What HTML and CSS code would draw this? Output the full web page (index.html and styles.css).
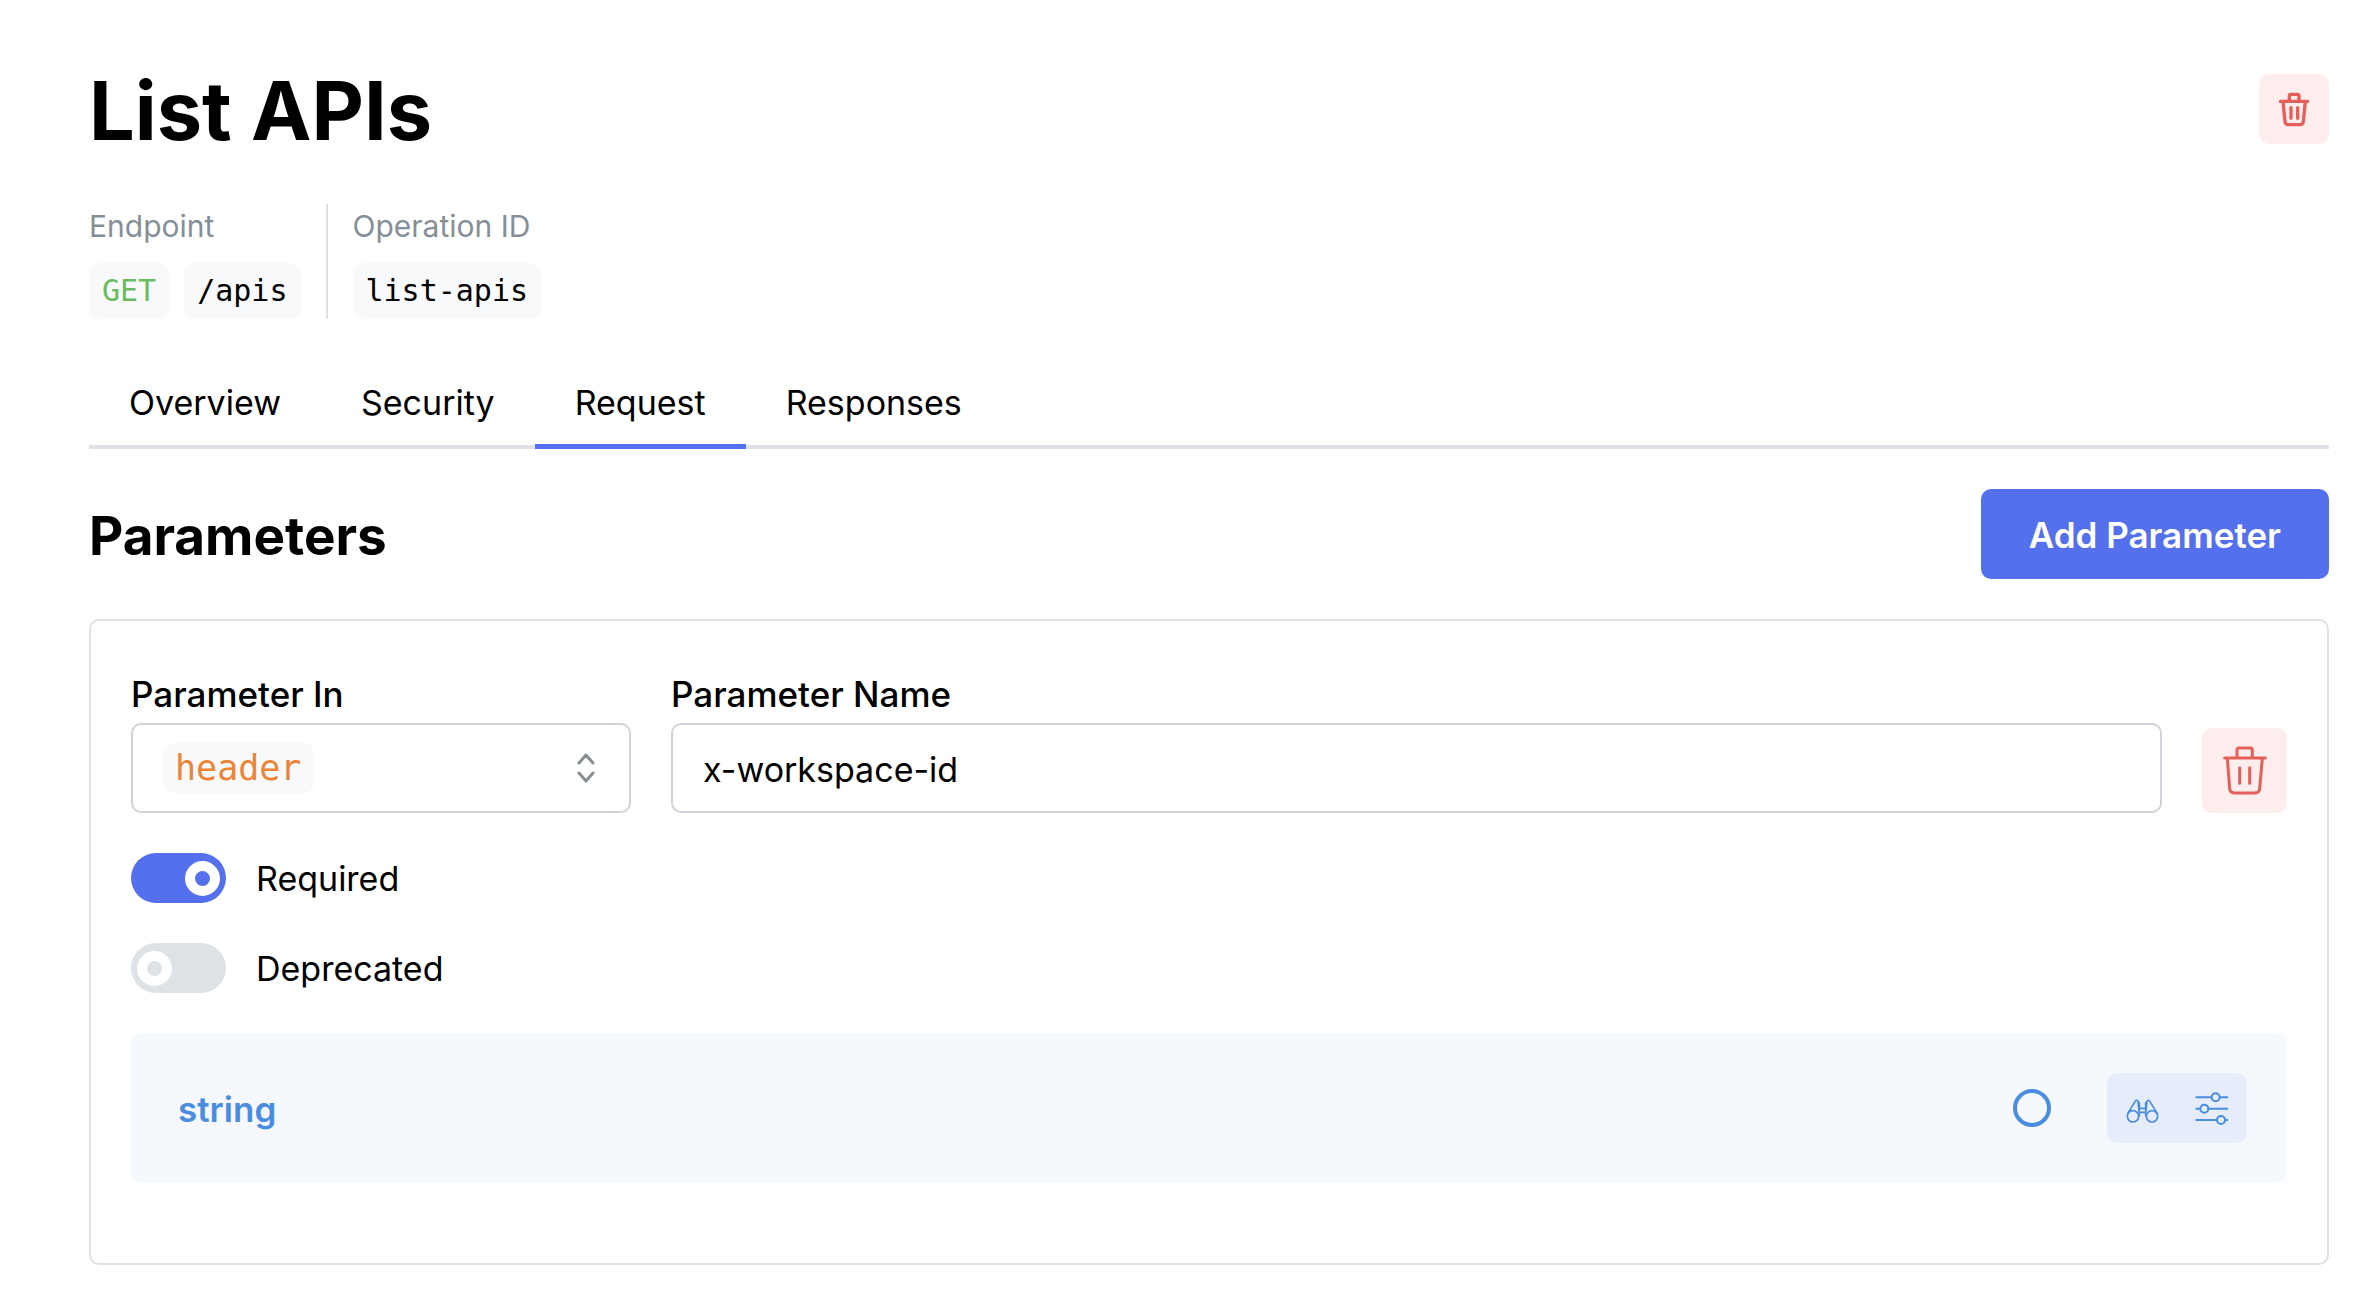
FILE: index.html
```html
<!DOCTYPE html>
<html lang="en">
<head>
    <meta charset="UTF-8">
    <meta name="viewport" content="width=device-width, initial-scale=1.0">
    <title>List APIs</title>
    <link rel="stylesheet" href="styles.css">
</head>
<body>

<main class="page">
    <header class="page-header">
        <h1>List APIs</h1>
        <button type="button" class="delete-button" aria-label="Delete operation">
            <svg width="30" height="35" viewBox="0 0 90 105" aria-hidden="true">
                <path d="M4 28H86M31 28V12Q31 7 36 7H55Q60 7 60 12V28M12 28L18 89Q19 98 28 98H63Q72 98 73 89L79 28M36 47V79M56 47V79"/>
            </svg>
        </button>
    </header>

    <!-- Endpoint info -->
    <div class="meta">
        <div class="meta-item">
            <div class="meta-label">Endpoint</div>
            <div class="codes">
                <code class="get">GET</code>
                <code>/apis</code>
            </div>
        </div>
        <div class="meta-item">
            <div class="meta-label">Operation ID</div>
            <div class="codes">
                <code>list-apis</code>
            </div>
        </div>
    </div>

    <div class="tabs" role="tablist">
        <button type="button" role="tab">Overview</button>
        <button type="button" role="tab">Security</button>
        <button type="button" role="tab" class="active" aria-selected="true">Request</button>
        <button type="button" role="tab">Responses</button>
    </div>

    <!-- Parameters -->
    <div class="section-header">
        <h2>Parameters</h2>
        <button type="button" class="add-button">Add Parameter</button>
    </div>

    <form class="card">
        <div class="fields">
            <div class="field">
                <label for="paramIn">Parameter In</label>
                <div class="select-box">
                    <select id="paramIn">
                        <option>header</option>
                        <option>query</option>
                        <option>path</option>
                        <option>cookie</option>
                    </select>
                    <svg width="20" height="32" viewBox="0 0 20 32" aria-hidden="true">
                        <path d="M3 11L10 3L17 11M3 21L10 29L17 21"/>
                    </svg>
                </div>
            </div>
            <div class="field field-name">
                <label for="paramName">Parameter Name</label>
                <input type="text" id="paramName" value="x-workspace-id">
            </div>
            <button type="button" class="delete-button large" aria-label="Delete parameter">
                <svg width="44" height="50" viewBox="0 0 132 150" aria-hidden="true">
                    <path d="M5 36H127M42 36V12Q42 6 48 6H82Q88 6 88 12V36M13 36L20 128Q21 141 34 141H96Q109 141 110 128L118 36M50 65V112M80 65V112"/>
                </svg>
            </button>
        </div>

        <div class="switch">
            <input type="checkbox" id="required" checked>
            <label for="required">Required</label>
        </div>
        <div class="switch">
            <input type="checkbox" id="deprecated">
            <label for="deprecated">Deprecated</label>
        </div>

        <!-- Schema -->
        <div class="schema">
            <span class="schema-type">string</span>
            <span class="ring"></span>
            <div class="actions">
                <button type="button" aria-label="Examples">
                    <svg width="36" height="36" viewBox="-3 -6 108 108" stroke-width="5" aria-hidden="true">
                        <circle cx="24" cy="73" r="17"/>
                        <circle cx="81" cy="73" r="17"/>
                        <path d="M8 65L30 29Q34 21 39 28L43 66M97 65L75 29Q71 21 66 28L62 66M43 32V72M62 32V72M43 49H62M43 61H62"/>
                    </svg>
                </button>
                <button type="button" aria-label="Settings">
                    <svg width="36" height="36" viewBox="1 -2 108 108" stroke-width="6" aria-hidden="true">
                        <path d="M8 20H53M78 20H101M8 54H19M44 54H101M8 88H70M95 88H101"/>
                        <circle cx="66" cy="20" r="12"/>
                        <circle cx="32" cy="54" r="12"/>
                        <circle cx="82" cy="88" r="12"/>
                    </svg>
                </button>
            </div>
        </div>
    </form>
</main>

</body>
</html>
```
FILE: styles.css
```css
*,
*::before {
    box-sizing: border-box;
}
body {
    margin: 0;
    background-color: #fff;
    color: #000;
    font-family: Inter, "Liberation Sans", sans-serif;
    font-size: 34px;
    line-height: 54px;
}
button,
input {
    font: inherit;
    color: inherit;
}
button {
    border: none;
    padding: 0;
    background: none;
    cursor: pointer;
}
svg {
    display: block;
    fill: none;
    stroke: currentColor;
    stroke-linecap: round;
    stroke-linejoin: round;
}
.page {
    display: flex;
    flex-direction: column;
    gap: 40px;
    padding: 54px 51px 30px 89px;
}
.page-header,
.section-header {
    display: flex;
    align-items: center;
    justify-content: space-between;
}
h1,
h2 {
    margin: 0;
    padding-top: 4px;
    font-weight: 700;
}
h1 {
    font-size: 81px;
    line-height: 106px;
}
h2 {
    font-size: 53px;
    line-height: 70px;
}
.delete-button {
    display: grid;
    place-items: center;
    flex-shrink: 0;
    width: 70px;
    height: 70px;
    border-radius: 10px;
    background-color: #fdeeed;
    color: #e55f5a;
    stroke-width: 10;
}
.delete-button.large {
    width: 85px;
    height: 85px;
    stroke-width: 9;
}

/* Endpoint info */
.meta {
    display: flex;
}
.meta-item + .meta-item {
    margin-left: 25px;
    padding-left: 25px;
    border-left: 2px solid #dee2e6;
}
.meta-label {
    margin-bottom: 14px;
    color: #868e96;
    font-size: 30px;
    line-height: 45px;
}
.codes {
    display: flex;
    gap: 15px;
}
code,
select {
    border-radius: 10px;
    background-color: #f8f9fb;
    font-family: "DejaVu Sans Mono", monospace;
}
code {
    padding: 0 13px;
    font-size: 30px;
    line-height: 56px;
}
.get {
    color: #69bc62;
}

.tabs {
    display: flex;
    border-bottom: 4px solid #dee2e6;
}
.tabs button {
    height: 90px;
    margin-bottom: -4px;
    padding: 2px 40px 0;
    border-bottom: 5px solid transparent;
}
.tabs .active {
    border-color: #5470ed;
}
.add-button {
    height: 90px;
    padding: 2px 48px 0;
    border-radius: 10px;
    background-color: #5470ed;
    color: #fff;
    font-size: 35px;
    font-weight: 600;
}

/* Parameter card */
.card {
    display: flex;
    flex-direction: column;
    gap: 40px;
    padding: 46px 40px 80px;
    border: 2px solid #dee2e6;
    border-radius: 10px;
}
.fields {
    display: flex;
    align-items: flex-end;
    gap: 40px;
}
.field {
    display: flex;
    flex-direction: column;
    flex: 0 0 500px;
}
.field-name {
    flex: 1;
}
.field label {
    margin-bottom: 2px;
    font-size: 35px;
    font-weight: 500;
}
.select-box,
input[type="text"] {
    width: 100%;
    height: 90px;
    border: 2px solid #ced4da;
    border-radius: 10px;
    background-color: #fff;
    padding: 2px 30px 0;
}
.select-box {
    display: flex;
    align-items: center;
    justify-content: space-between;
    padding: 0 33px 0 30px;
    color: #868e96;
    stroke-width: 3;
}
select {
    appearance: none;
    height: 50px;
    padding: 0 12px;
    border: none;
    color: #ec8435;
    font-size: 35px;
}
.switch {
    display: flex;
    align-items: center;
    gap: 30px;
    height: 50px;
}
.switch label,
.schema-type {
    padding-top: 2px;
}
input[type="checkbox"] {
    appearance: none;
    display: flex;
    align-items: center;
    width: 95px;
    height: 50px;
    margin: 0;
    padding: 0 6px;
    border-radius: 25px;
    background-color: #dee2e6;
}
input[type="checkbox"]::before {
    content: "";
    width: 35px;
    height: 35px;
    border: 10px solid #fff;
    border-radius: 50%;
}
input[type="checkbox"]:checked {
    justify-content: flex-end;
    background-color: #5470ed;
}

/* Schema row */
.schema {
    display: flex;
    align-items: center;
    height: 150px;
    padding: 0 40px 0 47px;
    border-radius: 10px;
    background-color: #f5f9fe;
    color: #4a8de0;
}
.schema-type {
    flex: 1;
    font-size: 35px;
    font-weight: 600;
}
.ring {
    width: 38px;
    height: 38px;
    margin-right: 56px;
    border: 4px solid #4a8de0;
    border-radius: 50%;
}
.actions {
    display: flex;
    border-radius: 10px;
    background-color: #e4edf9;
}
.actions button {
    display: grid;
    place-items: center;
    width: 70px;
    height: 70px;
}
```
